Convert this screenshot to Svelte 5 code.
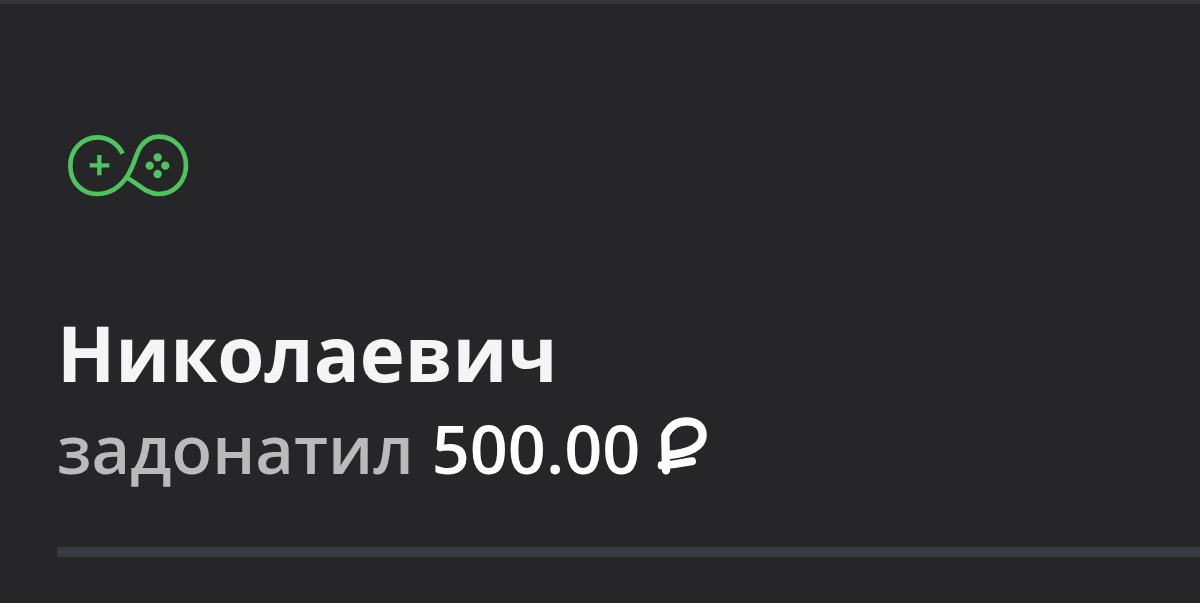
<script>
	const donation = {
		name: 'Николаевич',
		action: 'задонатил',
		amount: 500,
	};

	const amount = donation.amount.toFixed(2);
</script>

<style>
	:global(body) {
		background: #262628;
	}

	.feed {
		box-sizing: border-box;
		height: 603px;
		overflow: hidden;
		border-top: 4px solid #35373d;
		background: #262628;
		font-family: "Open Sans", "Noto Sans", sans-serif;
	}

	.donation {
		box-sizing: border-box;
		height: 553px;
		margin-left: 57px;
		padding-top: 126px;
		border-bottom: 10px solid #3a3b41;
	}

	.logo {
		display: block;
		width: 130px;
		height: 70px;
		margin-left: 8px;
		fill: none;
		stroke: #4dc45c;
	}

	.name {
		margin-top: 103px;
		color: #f5f5f6;
		font-size: 76.2px;
		font-weight: 700;
		line-height: 100px;
		white-space: nowrap;
	}

	.details {
		display: flex;
		gap: 18px;
		color: #bababa;
		font-size: 66.6px;
		font-weight: 600;
		line-height: 91px;
		white-space: nowrap;
	}

	.amount {
		color: #fff;
	}

	.ruble {
		width: 54px;
		height: 62px;
		margin: 12px 0 0 -3px;
		fill: none;
		stroke: #fff;
	}
</style>

<div class="feed">
	<div class="donation">
		<svg class="logo" viewBox="30 30 390 210">
			<g stroke-width="14">
				<path d="M203 101C188 71 160 52 128 52C81 52 46 90 46 137C46 185 80 222 126 222C168 222 198 197 217 168C240 132 240 107 256 82C270 60 288 50 312 50C358 50 393 88 393 136C393 184 358 222 312 222C272 222 246 188 217 174" />
				<path stroke-width="13" d="M104 136H163M133 105V166" />
			</g>
			<g fill="#4dc45c" stroke="none">
				<circle cx="308" cy="112" r="12.5" />
				<circle cx="284" cy="137" r="12.5" />
				<circle cx="331" cy="137" r="12.5" />
				<circle cx="308" cy="162" r="12.5" />
			</g>
		</svg>

		<div class="name">{donation.name}</div>
		<div class="details">
			<span>{donation.action}</span>
			<span class="amount">{amount}</span>
			<svg class="ruble" viewBox="45 30 162 186" stroke-linecap="round" stroke-linejoin="round">
				<path stroke-width="25" d="M78 196L76 91C90 62 112 49 140 49C170 49 188 65 188 91C188 126 146 145 84 150" />
				<path stroke-width="24" d="M65 181C95 180 119 174 156 169" />
			</svg>
		</div>
	</div>
</div>
